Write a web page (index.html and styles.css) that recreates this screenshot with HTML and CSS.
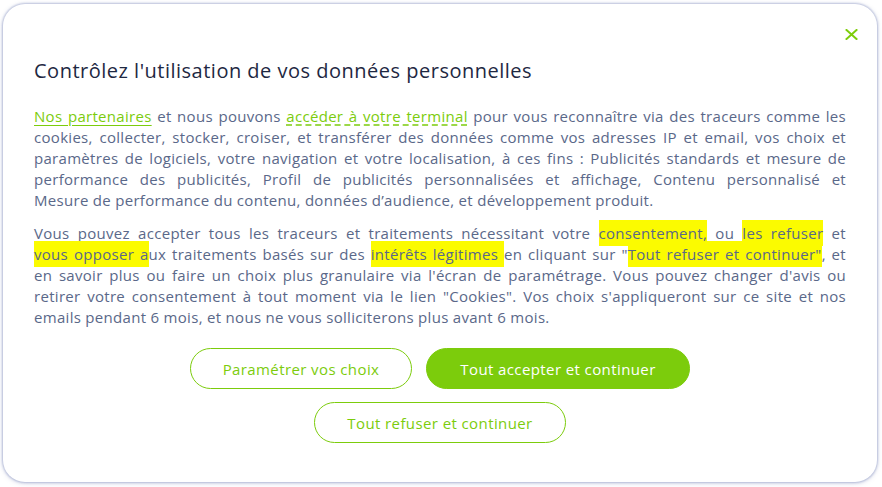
FILE: index.html
```html
<!DOCTYPE html>
<html lang="fr">
<head>
<meta charset="utf-8">
<title>Cookies</title>
<link rel="stylesheet" href="styles.css">
</head>
<body>
<div class="modal">
  <button class="close" aria-label="Fermer">
    <svg width="13" height="11" viewBox="0 0 13 11"><path d="M1.5 1 L11.5 10 M11.5 1 L1.5 10" stroke="#7dcd0a" stroke-width="2" stroke-linecap="square" fill="none"/></svg>
  </button>
  <h1 class="title">Contrôlez l'utilisation de vos données personnelles</h1>
  <div class="text">
    <p class="para">
      <span class="ln"><a class="lk solid">Nos partenaires</a> et nous pouvons <a class="lk dashed">accéder à votre terminal</a> pour vous reconnaître via des traceurs comme les</span>
      <span class="ln">cookies, collecter, stocker, croiser, et transférer des données comme vos adresses IP et email, vos choix et</span>
      <span class="ln">paramètres de logiciels, votre navigation et votre localisation, à ces fins : Publicités standards et mesure de</span>
      <span class="ln">performance des publicités, Profil de publicités personnalisées et affichage, Contenu personnalisé et</span>
      <span class="ln last">Mesure de performance du contenu, données d’audience, et développement produit.</span>
    </p>
    <p class="para">
      <span class="ln">Vous pouvez accepter tous les traceurs et traitements nécessitant votre <mark class="hl">consentement,</mark> ou <mark class="hl">les refuser</mark> et</span>
      <span class="ln"><mark class="hl">vous opposer a</mark>ux traitements basés sur des <mark class="hl">intérêts légitimes </mark>en cliquant sur "<mark class="hl">Tout refuser et continuer"</mark>, et</span>
      <span class="ln">en savoir plus ou faire un choix plus granulaire via l'écran de paramétrage. Vous pouvez changer d'avis ou</span>
      <span class="ln">retirer votre consentement à tout moment via le lien "Cookies". Vos choix s'appliqueront sur ce site et nos</span>
      <span class="ln last">emails pendant 6 mois, et nous ne vous solliciterons plus avant 6 mois.</span>
    </p>
  </div>
  <div class="actions">
    <div class="row">
      <button class="btn outline w1">Paramétrer vos choix</button>
      <button class="btn filled w2">Tout accepter et continuer</button>
    </div>
    <div class="row">
      <button class="btn outline w3">Tout refuser et continuer</button>
    </div>
  </div>
</div>
</body>
</html>
```

FILE: styles.css
```css
html, body {
  margin: 0;
  padding: 0;
  background: #ffffff;
}
body {
  padding: 4px 5px 5px 3px;
  font-family: "Open Sans", "DejaVu Sans", sans-serif;
}
.modal {
  position: relative;
  box-sizing: border-box;
  width: 874px;
  height: 478px;
  background: #fff;
  border-radius: 22px;
  box-shadow: 0 0 2px 1px rgba(150, 160, 200, 0.55), 0 1px 5px rgba(120, 130, 180, 0.35);
  padding: 54px 31px 0 31px;
}
.close {
  position: absolute;
  top: 24px;
  right: 19px;
  background: none;
  border: 0;
  padding: 0;
  width: 14px;
  height: 13px;
  display: flex;
  align-items: center;
  justify-content: center;
}
.title {
  margin: 0;
  font-size: 20px;
  line-height: 26px;
  font-weight: 500;
  color: #1e2842;
  letter-spacing: 0.5px;
}
.text {
  margin-top: 22px;
  color: #5a6889;
  font-size: 15px;
  line-height: 21px;
  letter-spacing: 0.3px;
}
.para {
  margin: 0 0 12px 0;
}
.ln {
  display: block;
  text-align: justify;
  text-align-last: justify;
  white-space: nowrap;
}
.ln.last {
  text-align-last: left;
}
.lk {
  color: #7ccc0c;
  text-decoration: underline;
  text-underline-offset: 3px;
}
.lk.dashed {
  text-decoration-style: dashed;
}
.hl {
  background: #fbfb00;
  color: inherit;
  padding: 3px 0;
}
.actions {
  margin-top: 20px;
  display: flex;
  flex-direction: column;
  align-items: center;
  gap: 13px;
}
.row {
  display: flex;
  gap: 14px;
  justify-content: center;
}
.btn {
  height: 41px;
  border-radius: 21px;
  font-family: inherit;
  font-size: 15px;
  font-weight: 500;
  letter-spacing: 0.4px;
  padding: 0;
  cursor: pointer;
}
.outline {
  background: #fff;
  border: 1px solid #7ccc0c;
  color: #7ccc0c;
}
.filled {
  background: #7ccc0c;
  border: 1px solid #7ccc0c;
  color: #fff;
}
.w1 { width: 222px; }
.w2 { width: 264px; }
.w3 { width: 252px; }
```
